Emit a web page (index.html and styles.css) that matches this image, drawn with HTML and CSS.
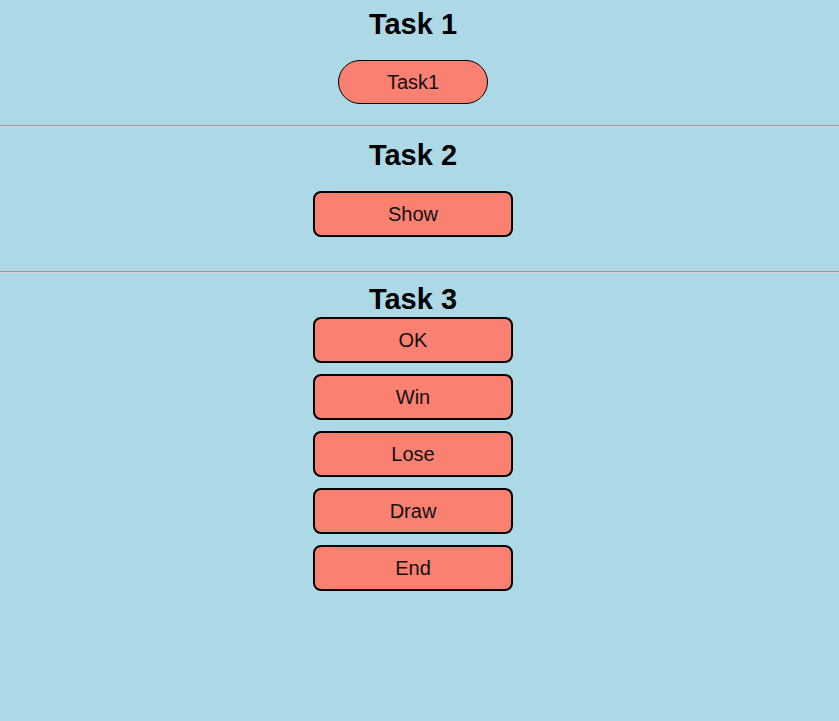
FILE: index.html
```html
<!DOCTYPE html>
<html>
<head>
<meta charset="utf-8">
<title>Tasks</title>
<link rel="stylesheet" href="styles.css">
</head>
<body>
<div class="task task-one">
    <h2 class="task-title">Task 1</h2>
    <button class="btn btn-pill">Task1</button>
</div>
<hr class="divider">
<div class="task task-two">
    <h2 class="task-title">Task 2</h2>
    <button class="btn">Show</button>
</div>
<hr class="divider">
<div class="task task-three">
    <h2 class="task-title">Task 3</h2>
    <div class="btn-list">
        <button class="btn">OK</button>
        <button class="btn">Win</button>
        <button class="btn">Lose</button>
        <button class="btn">Draw</button>
        <button class="btn">End</button>
    </div>
</div>
</body>
</html>
```

FILE: styles.css
```css
/* Reset */
* { margin: 0; padding: 0; box-sizing: border-box; }

body {
    background: lightblue;
    font-family: "Liberation Sans", Arial, sans-serif;
    color: #000;
    min-height: 721px;
}

/* Task blocks */
.task {
    display: flex;
    flex-direction: column;
    align-items: center;
    padding-right: 13px;
}

.task-one {
    padding-top: 8px;
    padding-bottom: 21px;
}

.task-two {
    padding-top: 12px;
    padding-bottom: 34px;
}

.task-three {
    padding-top: 10px;
}

.task-title {
    font-size: 29px;
    font-weight: bold;
    line-height: 32px;
}

.task-one .task-title,
.task-two .task-title {
    margin-bottom: 20px;
}

.task-three .task-title {
    margin-bottom: 2px;
}

.divider {
    border: 0;
    border-top: 1px solid #9a9a9a;
    border-bottom: 1px solid #d6d6d6;
    height: 2px;
}

/* Buttons */
.btn {
    width: 200px;
    height: 46px;
    background: salmon;
    border: 2px solid #000;
    border-radius: 8px;
    font-family: "Liberation Sans", Arial, sans-serif;
    font-size: 20px;
    color: #111;
    cursor: pointer;
}

.btn-pill {
    width: 150px;
    height: 44px;
    border-width: 1px;
    border-radius: 22px;
}

.btn-list {
    display: flex;
    flex-direction: column;
    gap: 11px;
}
```
